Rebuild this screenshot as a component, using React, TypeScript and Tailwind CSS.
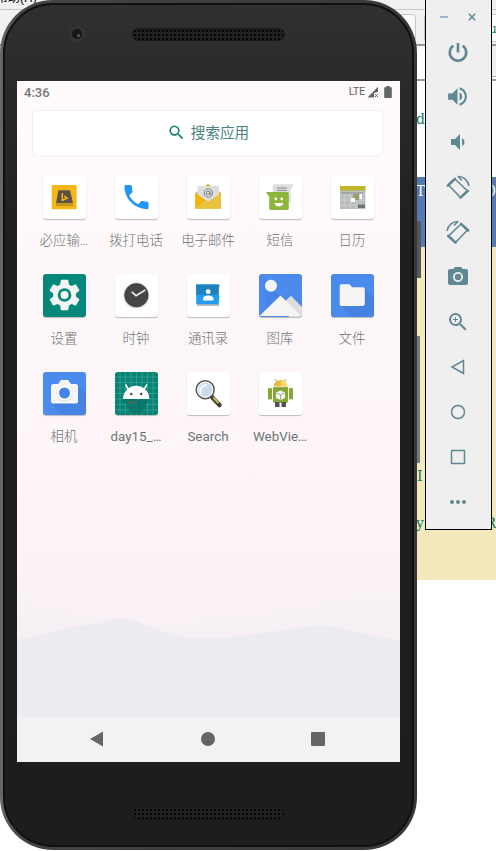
import type { ReactNode } from "react";
import {
  MdVolumeUp,
  MdVolumeDown,
  MdPhotoCamera,
  MdZoomIn,
  MdMoreHoriz,
  MdSearch,
} from "react-icons/md";

const cjk = "font-[Roboto,'Noto_Sans_CJK_SC',sans-serif]";

function Tile({
  label,
  bg = "bg-white",
  weight = "font-light",
  children,
}: {
  label: string;
  bg?: string;
  weight?: string;
  children: ReactNode;
}) {
  return (
    <div className="flex h-[98px] flex-col items-center">
      <div className={`h-[43px] w-[43px] overflow-hidden rounded-[3px] shadow-[0_1px_1px_rgba(0,0,0,0.25)] ${bg}`}>
        <svg viewBox="0 0 43 43" className="block h-[43px] w-[43px]">{children}</svg>
      </div>
      <span className={`mt-3 whitespace-nowrap text-[13.4px] leading-5 text-[#6c7575] ${weight}`}>{label}</span>
    </div>
  );
}

function AppGrid() {
  return (
    <div className="-ml-px grid grid-cols-5 px-3 pt-5">
      <Tile label="必应输…">
        <rect x="8.8" y="9" width="24.8" height="24.2" fill="#f5b616" />
        <path d="M15.5 14.2H27l3 13H13z" fill="#5a5246" />
        <path d="M13 28.4h17v1.2H13z" fill="#8a7a2c" />
        <path d="M19.3 17v7.3l4.900-2.200-3-2" fill="none" stroke="#f5b616" strokeWidth="1.5" />
      </Tile>
      <Tile label="拨打电话">
        <path
          transform="translate(5.4 5) scale(1.34)"
          fill="#2196f3"
          d="M6.62 10.79c1.44 2.83 3.76 5.14 6.59 6.59l2.2-2.2c.27-.27.67-.36 1.02-.24 1.12.37 2.33.57 3.57.57.55 0 1 .45 1 1V20c0 .55-.45 1-1 1C10.61 21 3 13.39 3 4c0-.55.45-1 1-1h3.5c.55 0 1 .45 1 1 0 1.25.2 2.45.57 3.57.11.35.03.74-.25 1.02z"
        />
      </Tile>
      <Tile label="电子邮件">
        <path d="M8.5 17 21 8l13 9v15.5H8.5z" fill="#d9a520" />
        <rect x="10.5" y="10" width="21.5" height="17" rx="1.5" fill="#dedede" />
        <path d="M8.5 17 21 25.5 34 17v15.7H8.5z" fill="#e9c23f" />
        <path d="M8.5 17 18 24 8.5 32.7z" fill="#f4b400" />
        <path d="M10.5 18 21 25.5 32 18v-3H10.5z" fill="#dedede" />
        <circle cx="21.3" cy="17" r="4.2" fill="none" stroke="#777" strokeWidth=".9" />
        <circle cx="21" cy="17" r="1.8" fill="none" stroke="#777" strokeWidth=".9" />
        <path d="M23 15v3.2h2" fill="none" stroke="#777" strokeWidth=".9" />
      </Tile>
      <Tile label="短信">
        <path d="M13.8 8.3h21.4l-3.5 5V27H13.8z" fill="#dedede" />
        <path d="M18 12h10M18 14.4h10" stroke="#888" strokeWidth="1" />
        <path d="M7 16h21c1 0 1.8.8 1.8 1.8v14.4c0 1-.8 1.8-1.8 1.8H12c-1 0-1.8-.8-1.8-1.8V21z" fill="#8db63c" />
        <circle cx="16.8" cy="23" r="1.4" fill="#fff" />
        <circle cx="22.7" cy="23" r="1.4" fill="#fff" />
        <path d="M15.5 27h8.7a4.4 4 0 0 1-8.7 0z" fill="#fff" />
      </Tile>
      <Tile label="日历">
        <rect x="9" y="10" width="25.4" height="23" fill="#b9bdbb" />
        <rect x="9" y="10" width="25.4" height="4.5" fill="#bdb82a" />
        <path d="M9 19h25M9 24h25M9 29h25M14 15v18M19.5 15v18M25 15v18M30 15v18" stroke="#ced1cf" strokeWidth=".8" />
        <path d="M10 16h22v2H10z" fill="#8d9897" opacity=".6" />
        <rect x="22" y="18" width="6" height="6" fill="#9c9b70" />
        <path d="M28.5 18h2.5v5h-2.5zM20 22h4v4h-4z" fill="#fafafa" />
        <rect x="27" y="28.5" width="7" height="3.5" fill="#6c7373" />
      </Tile>

      <Tile label="设置" bg="bg-[#05887a]">
        <path
          transform="translate(3.3 2.8) scale(1.52)"
          fill="#f5f5f5"
          d="M19.43 12.98c.04-.32.07-.64.07-.98s-.03-.66-.07-.98l2.11-1.65c.19-.15.24-.42.12-.64l-2-3.46c-.12-.22-.39-.3-.61-.22l-2.49 1c-.52-.4-1.08-.73-1.69-.98l-.38-2.65C14.46 2.18 14.25 2 14 2h-4c-.25 0-.46.18-.49.42l-.38 2.65c-.61.25-1.17.59-1.69.98l-2.49-1c-.23-.09-.49 0-.61.22l-2 3.46c-.13.22-.07.49.12.64l2.11 1.65c-.04.32-.07.65-.07.98s.03.66.07.98l-2.11 1.65c-.19.15-.24.42-.12.64l2 3.46c.12.22.39.3.61.22l2.49-1c.52.4 1.08.73 1.69.98l.38 2.65c.03.24.24.42.49.42h4c.25 0 .46-.18.49-.42l.38-2.65c.61-.25 1.17-.59 1.69-.98l2.49 1c.23.09.49 0 .61-.22l2-3.46c.12-.22.07-.49-.12-.64z"
        />
        <circle cx="21.5" cy="21" r="6.8" fill="#05887a" />
        <circle cx="21.5" cy="21" r="4" fill="#f5f5f5" />
      </Tile>
      <Tile label="时钟">
        <circle cx="21.4" cy="21.6" r="13" fill="#d9dbdb" />
        <circle cx="21.4" cy="21.2" r="11.7" fill="#454545" stroke="#303030" strokeWidth=".6" />
        <path d="M16.8 17.8 21 21.7 30.3 16" fill="none" stroke="#eee" strokeWidth="1.6" />
      </Tile>
      <Tile label="通讯录">
        <path d="M10 30h22v2H10z" fill="#bbb" />
        <path d="M9.2 10.5h22.5l.8 1.5-.8 2v6.5l.8 2-.8 7.8H9.2z" fill="#239cf0" />
        <path d="M9.2 10.5h22.5l.8 1.5-.8 2v6.8H9.2z" fill="#1e82bd" />
        <circle cx="21.2" cy="17.7" r="2.4" fill="#fff" />
        <path d="M16 26.6v-1.8c0-2.2 3-3.2 5.2-3.2s5.2 1 5.2 3.2v1.8z" fill="#fff" />
      </Tile>
      <Tile label="图库" bg="bg-[#4c8bee]">
        <path d="m6 16 8-1 7 7-15 13z" fill="#3f7bdc" opacity=".4" />
        <circle cx="12" cy="11.8" r="6" fill="#f5f5f5" />
        <path d="m24 29 8-7.3L43 33v10H30z" fill="#dedede" />
        <path d="M.5 42 21.5 21.5 42 42z" fill="#f5f5f5" />
      </Tile>
      <Tile label="文件" bg="bg-[#4c8bee]">
        <path d="m33 14 10 10v19H21L10 32z" fill="#417ddb" opacity=".6" />
        <path d="M10.5 10.2h8l2.5 3h11c1 0 1.8.8 1.8 1.8v15c0 1-.8 1.9-1.8 1.9H10.5c-1 0-1.8-.8-1.8-1.9V12c0-1 .8-1.8 1.8-1.8z" fill="#f5f5f5" />
      </Tile>

      <Tile label="相机" bg="bg-[#4c8bee]">
        <path d="m34 13 9 9v21H19L9 32z" fill="#417ddb" opacity=".6" />
        <path d="M10 12h5l3-4h7l3 4h5c1 0 2 1 2 2v15.5c0 1-1 2-2 2H10c-1 0-2-1-2-2V14c0-1 1-2 2-2z" fill="#f5f5f5" />
        <circle cx="21.5" cy="21.5" r="7.8" fill="#ddd" />
        <circle cx="21.5" cy="21" r="7.5" fill="#fff" />
        <circle cx="21.5" cy="21" r="5.5" fill="#4285e8" />
      </Tile>
      <Tile label="day15_…" bg="bg-[#078474]" weight="font-normal">
        <path d="M5 0v43M10.5 0v43M16 0v43M21.5 0v43M27 0v43M32.5 0v43M38 0v43M0 5h43M0 10.5h43M0 16h43M0 21.5h43M0 27h43M0 32.5h43M0 38h43" stroke="#55ada5" strokeWidth=".5" />
        <path d="M8 27h26l-8 15h-9z" fill="#067465" opacity=".8" />
        <path d="M8 27a13.2 13.2 0 0 1 26.4 0z" fill="#fff" />
        <path d="m13.5 17.5-3-5M29 17.5l3-5" stroke="#fff" strokeWidth="1.5" />
        <circle cx="16.3" cy="22" r="1.2" fill="#37474f" />
        <circle cx="26.2" cy="22" r="1.2" fill="#37474f" />
        <path d="M13 28.5v2h6v-2" fill="none" stroke="#a05040" strokeWidth=".7" />
      </Tile>
      <Tile label="Search" weight="font-normal">
        <path d="m24 24 8.5 9" stroke="#454239" strokeWidth="4.5" strokeLinecap="round" />
        <path d="m26.5 25.5 5 5.5" stroke="#c7bd55" strokeWidth="2" />
        <circle cx="18.2" cy="17.7" r="9" fill="#d8e1eb" stroke="#555" strokeWidth="1.5" />
        <circle cx="18.2" cy="17.7" r="7.5" fill="#cdd9ec" stroke="#fafafa" strokeWidth="1" />
        <path d="M14 22c-2-5 1-9 6-9" fill="none" stroke="#f5faff" strokeWidth="2" />
      </Tile>
      <Tile label="WebVie…" weight="font-normal">
        <path d="m18 10-2-3M25 10l2-3" stroke="#9aaa70" strokeWidth="1" />
        <path d="M14.5 14.5a7 6.5 0 0 1 14 0z" fill="#e6bd3b" />
        <path d="M22 8a6.5 6.5 0 0 1 6.5 6.5H22z" fill="#f6d96b" />
        <path d="M14 15.5h15V29c0 1-.8 2-2 2H16c-1 0-2-1-2-2z" fill="#87a832" />
        <rect x="9" y="16" width="4" height="11.5" rx="1" fill="#87a832" />
        <rect x="30" y="16" width="4" height="11.5" rx="1" fill="#87a832" />
        <path d="M16 30h4.5v5H16zM22.5 30H27v5h-4.5z" fill="#554f58" />
        <path d="m17 20.5 4.5-2 4.5 2V26l-4.5 2-4.5-2z" fill="#fafafa" />
        <path d="m17.5 21 4 1.7 4-1.7M21.5 23v4.5M14 15.8h15" fill="none" stroke="#71854b" strokeWidth=".7" />
      </Tile>
    </div>
  );
}

function Speaker() {
  return (
    <div className="ml-[115px] h-[13px] w-[153px] rounded-full border border-[#1a1a1a] bg-[#202020] bg-[radial-gradient(circle,#060606_1px,transparent_1.4px)] bg-[length:4px_4px]" />
  );
}

function Phone() {
  return (
    <div className="absolute left-0 top-0 h-[850px] w-[417px] rounded-[53px] bg-gradient-to-r from-[#666969] via-[#444] via-5% to-[#383838] p-[3px]">
      <div className="h-full w-full rounded-[50px] border-2 border-[#101010] bg-gradient-to-b from-[#303031] via-[#1e1e1e] via-30% to-[#1d1d1d] px-3">
        <div className="relative h-[76px] pt-[23px]">
          <div className="absolute left-[52px] top-[21px] flex h-4 w-4 items-center justify-center rounded-full bg-[#343434]">
            <div className="h-2.5 w-2.5 rounded-full bg-[#161616] p-[5px]">
              <div className="h-[3px] w-[3px] rounded-full bg-[#555a60]" />
            </div>
          </div>
          <Speaker />
        </div>
        <div className={`relative isolate flex h-[681px] w-[383px] flex-col overflow-hidden bg-gradient-to-b from-[#fffafb] via-[#fdf5f8] via-60% to-[#f4edf2] ${cjk}`}>
          <svg viewBox="0 0 383 681" className="absolute inset-0 -z-10 h-full w-full">
            <defs>
              <linearGradient id="haze" x1="0" y1="0" x2="0" y2="1">
                <stop offset="0" stopColor="#f5eff3" stopOpacity="0" />
                <stop offset=".4" stopColor="#f5eff3" />
              </linearGradient>
            </defs>
            <path d="M0 515Q80 545 160 543T383 500V681H0z" fill="url(#haze)" />
            <path d="M0 558 12 557 50 547 82 542 95 538Q108 536 121 541L158 555Q180 560 225 555L288 546Q313 543 332 550L383 560V681H0z" fill="#ecebf0" />
          </svg>
          <div className="flex h-[29px] items-start justify-between pl-[7px] pr-2">
            <span className="mt-[2px] text-[13px] font-medium leading-5 text-[#737878]">4:36</span>
            <div className="mt-[5px] flex items-center text-[#646666]">
              <span className="text-[11px] leading-3 tracking-[-0.3px]">LTE</span>
              <svg viewBox="0 0 12 12" className="ml-[2px] h-3 w-3">
                <path d="M.5 11.5 11 .8V6L7 7v4.5z" fill="currentColor" />
                <path d="m8 8 3 3m0-3-3 3" stroke="currentColor" strokeWidth="1" />
              </svg>
              <svg viewBox="0 0 8 12" className="ml-[5px] h-3 w-2">
                <path d="M2.3 0h3.4v1.3H7c.5 0 .8.3.8.8v9c0 .5-.3.9-.8.9H1c-.5 0-.8-.4-.8-.9v-9c0-.5.3-.8.8-.8h1.3z" fill="currentColor" />
              </svg>
            </div>
          </div>
          <div className="ml-[15px] flex h-[46px] w-[351px] items-center justify-center gap-[5px] rounded-[3px] border border-[#f7eff1] bg-white pl-px text-[14.6px] text-[#4b817e]">
            <MdSearch className="-mt-0.5 h-[19px] w-[19px] text-[#168078]" />
            <span className="leading-5">搜索应用</span>
          </div>
          <AppGrid />
          <div className="mt-auto flex h-[45px] shrink-0 items-center bg-[#f2f2f5] pb-px pl-[73px] text-[#656664]">
            <svg viewBox="0 0 14 16" className="h-4 w-3.5">
              <path d="M0 8 13 .5v15z" fill="currentColor" />
            </svg>
            <div className="ml-[97px] h-[14px] w-[14px] rounded-full bg-[#656664]" />
            <div className="ml-24 h-[14px] w-[14px] rounded-[1px] bg-[#656664]" />
          </div>
        </div>
        <div className="pt-[45px]">
          <Speaker />
        </div>
      </div>
    </div>
  );
}

function Cell({ children }: { children: ReactNode }) {
  return <div className="flex h-[45px] items-center justify-center">{children}</div>;
}

function RotateIcon({ flip = false }: { flip?: boolean }) {
  return (
    <svg viewBox="0 0 30 30" className={`h-[30px] w-[30px] ${flip ? "-scale-x-100" : ""}`}>
      <path d="M5.5 13 12 7l12.5 12-7 6.5z" fill="none" stroke="currentColor" strokeWidth="1.6" strokeLinejoin="round" />
      <path d="m4.9 13.5 7-6.6M17.5 25.6l7.3-6.8" stroke="currentColor" strokeWidth="2.6" strokeLinecap="round" />
      <path d="M14.500 4.500C20 4 25 8 26 14M15 4.500l4 4" fill="none" stroke="currentColor" strokeWidth="1.5" />
    </svg>
  );
}

function Toolbar() {
  return (
    <div className="absolute left-[425px] top-0 h-[530px] w-[67px] border-x border-b border-black bg-[#efefef] text-[#608793]">
      <div className="flex h-[30px] items-center pl-[14px] pt-1">
        <div className="h-[2px] w-2 bg-[#a3b4cd]" />
        <svg viewBox="0 0 8 8" className="ml-5 h-2 w-2">
          <path d="m.8.8 6.4 6.4m0-6.4L.8 7.2" stroke="currentColor" strokeWidth="1.5" />
        </svg>
      </div>
      <div className="-mt-px pr-0.5">
        <Cell>
          <svg viewBox="0 0 24 24" className="h-6 w-6">
            <path d="M12 3v9.500M7.300 5.800a8.200 8.200 0 1 0 9.400 0" fill="none" stroke="currentColor" strokeWidth="2.600" />
          </svg>
        </Cell>
        <Cell><MdVolumeUp size={25} /></Cell>
        <Cell><MdVolumeDown size={24} /></Cell>
        <Cell><RotateIcon /></Cell>
        <Cell><RotateIcon flip /></Cell>
        <Cell><MdPhotoCamera size={24} /></Cell>
        <Cell><MdZoomIn size={24} /></Cell>
        <Cell>
          <svg viewBox="0 0 16 16" className="h-4 w-4">
            <path d="M2 8 13.5 1.5v13z" fill="none" stroke="currentColor" strokeWidth="1.5" />
          </svg>
        </Cell>
        <Cell>
          <svg viewBox="0 0 16 16" className="h-4 w-4">
            <circle cx="8" cy="8" r="6.5" fill="none" stroke="currentColor" strokeWidth="1.5" />
          </svg>
        </Cell>
        <Cell>
          <svg viewBox="0 0 16 16" className="h-4 w-4">
            <rect x="1.5" y="1.5" width="13" height="13" rx=".5" fill="none" stroke="currentColor" strokeWidth="1.5" />
          </svg>
        </Cell>
        <Cell><MdMoreHoriz size={24} /></Cell>
      </div>
    </div>
  );
}

function Editor() {
  return (
    <div className="flex h-[851px] flex-col bg-white font-['DejaVu_Serif',serif] text-[14px] leading-5 text-[#0c7962]">
      <div className="h-[9px] overflow-hidden bg-[#f0f0f0] font-['Liberation_Sans','Noto_Sans_CJK_SC',sans-serif] text-[12px] text-black">
        <div className="-ml-1 -mt-[12px] whitespace-nowrap">帮助(H)</div>
      </div>
      <div className="flex h-[37px] justify-end border-b-2 border-t border-b-[#90999d] border-t-[#c9c9c9] bg-[#f1f1f1] pt-1">
        <div className="h-7 w-[116px] rounded border border-[#c5c5c5] bg-[#fafafa]" />
        <div className="ml-2 h-7 w-[72px] rounded-l border border-r-0 border-[#c5c5c5] bg-white pl-[64px] pt-1 text-[12px]">u</div>
      </div>
      <div className="flex h-[35px] justify-end border-b-2 border-[#90a0a6]">
        <div className="h-[31px] w-2 border-b border-[#aaa] bg-[#efefef]" />
      </div>
      <div className="h-24 pl-[416px] pt-[28px]">d</div>
      <div className="flex h-[70px] justify-between bg-[#5579b2] pl-[416px] pt-1 text-white">
        <span>T</span>
        <span>0</span>
      </div>
      <div className="flex h-[333px] flex-col bg-[#f4e9bd]">
        <div className="mt-[219px] pl-[417px]">I</div>
        <div className="mt-[27px] flex justify-between pl-[416px]">
          <span>y</span>
          <span>R</span>
        </div>
      </div>
    </div>
  );
}

export default function App() {
  return (
    <div className="relative h-[851px] w-[496px] overflow-hidden">
      <Editor />
      <div className="absolute left-[414px] top-[221px] h-[57px] w-[7px] bg-[#55585b]" />
      <div className="absolute left-[414px] top-[336px] h-[127px] w-[6px] bg-[#747b80]" />
      <Phone />
      <Toolbar />
    </div>
  );
}
